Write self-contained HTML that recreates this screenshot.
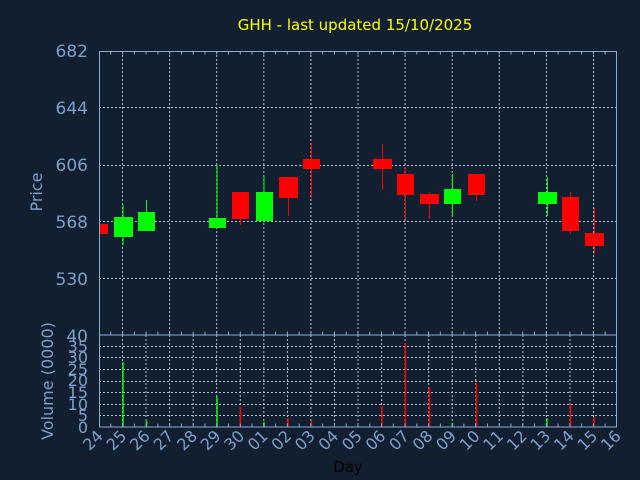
<!DOCTYPE html>
<html><head><meta charset="utf-8"><style>
html,body{margin:0;padding:0;background:#111f30;}
svg{display:block;font-family:"DejaVu Sans","Liberation Sans",sans-serif;}
</style></head><body>
<svg width="640" height="480" viewBox="0 0 640 480" xmlns="http://www.w3.org/2000/svg">
<rect width="640" height="480" fill="#111f30"/>
<text x="355" y="30" fill="#ffff00" font-size="15" text-anchor="middle">GHH - last updated 15/10/2025</text>
<g stroke="#b8c0cc" stroke-width="1" stroke-dasharray="2,2">
<line x1="99" y1="107.5" x2="617" y2="107.5"/>
<line x1="99" y1="165.5" x2="617" y2="165.5"/>
<line x1="99" y1="221.5" x2="617" y2="221.5"/>
<line x1="99" y1="278.5" x2="617" y2="278.5"/>
<line x1="122.5" y1="51" x2="122.5" y2="335"/>
<line x1="169.6" y1="51" x2="169.6" y2="335"/>
<line x1="216.7" y1="51" x2="216.7" y2="335"/>
<line x1="263.8" y1="51" x2="263.8" y2="335"/>
<line x1="310.9" y1="51" x2="310.9" y2="335"/>
<line x1="358" y1="51" x2="358" y2="335"/>
<line x1="405.1" y1="51" x2="405.1" y2="335"/>
<line x1="452.2" y1="51" x2="452.2" y2="335"/>
<line x1="499.3" y1="51" x2="499.3" y2="335"/>
<line x1="546.4" y1="51" x2="546.4" y2="335"/>
<line x1="593.5" y1="51" x2="593.5" y2="335"/>
</g>
<g stroke="#b8c0cc" stroke-width="1" stroke-dasharray="2,2">
<line x1="99" y1="346.5" x2="617" y2="346.5"/>
<line x1="99" y1="357.5" x2="617" y2="357.5"/>
<line x1="99" y1="369.5" x2="617" y2="369.5"/>
<line x1="99" y1="381.5" x2="617" y2="381.5"/>
<line x1="99" y1="392.5" x2="617" y2="392.5"/>
<line x1="99" y1="404.5" x2="617" y2="404.5"/>
<line x1="99" y1="415.5" x2="617" y2="415.5"/>
<line x1="122.5" y1="335" x2="122.5" y2="427"/>
<line x1="146" y1="335" x2="146" y2="427"/>
<line x1="169.6" y1="335" x2="169.6" y2="427"/>
<line x1="193.2" y1="335" x2="193.2" y2="427"/>
<line x1="216.7" y1="335" x2="216.7" y2="427"/>
<line x1="240.3" y1="335" x2="240.3" y2="427"/>
<line x1="263.8" y1="335" x2="263.8" y2="427"/>
<line x1="287.4" y1="335" x2="287.4" y2="427"/>
<line x1="310.9" y1="335" x2="310.9" y2="427"/>
<line x1="334.5" y1="335" x2="334.5" y2="427"/>
<line x1="358" y1="335" x2="358" y2="427"/>
<line x1="381.6" y1="335" x2="381.6" y2="427"/>
<line x1="405.1" y1="335" x2="405.1" y2="427"/>
<line x1="428.7" y1="335" x2="428.7" y2="427"/>
<line x1="452.2" y1="335" x2="452.2" y2="427"/>
<line x1="475.8" y1="335" x2="475.8" y2="427"/>
<line x1="499.3" y1="335" x2="499.3" y2="427"/>
<line x1="522.9" y1="335" x2="522.9" y2="427"/>
<line x1="546.4" y1="335" x2="546.4" y2="427"/>
<line x1="570" y1="335" x2="570" y2="427"/>
<line x1="593.5" y1="335" x2="593.5" y2="427"/>
</g>
<g stroke-width="1">
<rect x="99" y="224" width="9" height="10" fill="#ff0000"/>
<line x1="123" y1="205" x2="123" y2="245" stroke="#00ff00"/><rect x="114" y="217" width="19" height="20" fill="#00ff00"/>
<line x1="146.5" y1="200" x2="146.5" y2="212" stroke="#00ff00"/><rect x="138" y="212" width="17" height="19" fill="#00ff00"/>
<line x1="217" y1="165" x2="217" y2="218" stroke="#00ff00"/><rect x="209" y="218" width="17" height="10" fill="#00ff00"/>
<line x1="240.5" y1="219" x2="240.5" y2="225" stroke="#ff0000"/><rect x="232" y="192" width="17" height="27" fill="#ff0000"/>
<line x1="264" y1="177" x2="264" y2="192" stroke="#00ff00"/><rect x="256" y="192" width="17" height="29" fill="#00ff00"/>
<line x1="288.5" y1="198" x2="288.5" y2="216" stroke="#ff0000"/><rect x="279" y="177" width="19" height="21" fill="#ff0000"/>
<line x1="311.5" y1="143" x2="311.5" y2="198" stroke="#ff0000"/><rect x="303" y="159" width="17" height="10" fill="#ff0000"/>
<line x1="382.5" y1="144" x2="382.5" y2="190" stroke="#ff0000"/><rect x="373" y="159" width="19" height="10" fill="#ff0000"/>
<line x1="405.5" y1="167" x2="405.5" y2="219" stroke="#ff0000"/><rect x="397" y="174" width="17" height="21" fill="#ff0000"/>
<line x1="429.5" y1="192" x2="429.5" y2="219" stroke="#ff0000"/><rect x="420" y="194" width="19" height="10" fill="#ff0000"/>
<line x1="452.5" y1="174" x2="452.5" y2="216" stroke="#00ff00"/><rect x="444" y="189" width="17" height="15" fill="#00ff00"/>
<line x1="476.5" y1="195" x2="476.5" y2="201" stroke="#ff0000"/><rect x="468" y="174" width="17" height="21" fill="#ff0000"/>
<line x1="547.5" y1="177" x2="547.5" y2="216" stroke="#00ff00"/><rect x="538" y="192" width="19" height="12" fill="#00ff00"/>
<line x1="570.5" y1="192" x2="570.5" y2="234" stroke="#ff0000"/><rect x="562" y="197" width="17" height="34" fill="#ff0000"/>
<line x1="594.5" y1="208" x2="594.5" y2="254" stroke="#ff0000"/><rect x="585" y="233" width="19" height="13" fill="#ff0000"/>
</g>
<g stroke-width="1.5">
<line x1="123" y1="362" x2="123" y2="427" stroke="#00ff00"/>
<line x1="146.5" y1="421" x2="146.5" y2="427" stroke="#00ff00"/>
<line x1="217" y1="397" x2="217" y2="427" stroke="#00ff00"/>
<line x1="240.5" y1="407" x2="240.5" y2="427" stroke="#ff0000"/>
<line x1="264" y1="422" x2="264" y2="427" stroke="#00ff00"/>
<line x1="288" y1="418" x2="288" y2="427" stroke="#ff0000"/>
<line x1="311.5" y1="421" x2="311.5" y2="427" stroke="#ff0000"/>
<line x1="382" y1="406" x2="382" y2="427" stroke="#ff0000"/>
<line x1="405.5" y1="343" x2="405.5" y2="427" stroke="#ff0000"/>
<line x1="429.5" y1="387" x2="429.5" y2="427" stroke="#ff0000"/>
<line x1="452.5" y1="423" x2="452.5" y2="427" stroke="#00ff00"/>
<line x1="476.5" y1="383" x2="476.5" y2="427" stroke="#ff0000"/>
<line x1="547" y1="418" x2="547" y2="427" stroke="#00ff00"/>
<line x1="570.5" y1="404" x2="570.5" y2="427" stroke="#ff0000"/>
<line x1="594" y1="417" x2="594" y2="427" stroke="#ff0000"/>
</g>
<g fill="none" stroke="#8aa8d4" stroke-width="1">
<rect x="99.5" y="51.5" width="517" height="283.5"/>
<rect x="99.5" y="335" width="517" height="92"/>
</g>
<g stroke="#8aa8d4">
<line x1="99" y1="53" x2="617" y2="53" stroke-width="3" stroke-dasharray="1,10.77" stroke-dashoffset="-11.3"/>
<line x1="99" y1="333" x2="617" y2="333" stroke-width="3" stroke-dasharray="1,10.77" stroke-dashoffset="-11.3"/>
<line x1="99" y1="425" x2="617" y2="425" stroke-width="3" stroke-dasharray="1,10.77" stroke-dashoffset="-11.3"/>
</g>
<g fill="#7d9fcc" font-size="17" text-anchor="end">
<text x="88" y="57">682</text>
<text x="88" y="114">644</text>
<text x="88" y="171">606</text>
<text x="88" y="228">568</text>
<text x="88" y="285">530</text>
<text x="88" y="342">40</text>
</g>
<g fill="#7d9fcc" font-size="16" text-anchor="end">
<text x="88" y="352">35</text>
<text x="88" y="363">30</text>
<text x="88" y="375">25</text>
<text x="88" y="386">20</text>
<text x="88" y="398">15</text>
<text x="88" y="410">10</text>
<text x="88" y="421">5</text>
<text x="88" y="433">0</text>
</g>
<text transform="translate(42,192) rotate(-90)" fill="#7d9fcc" font-size="16" text-anchor="middle">Price</text>
<text transform="translate(53,381) rotate(-90)" fill="#7d9fcc" font-size="16" text-anchor="middle">Volume (0000)</text>
<g fill="#7d9fcc" font-size="16" text-anchor="end">
<text transform="translate(104,437) rotate(-45)">24</text>
<text transform="translate(127.5,437) rotate(-45)">25</text>
<text transform="translate(151,437) rotate(-45)">26</text>
<text transform="translate(174.6,437) rotate(-45)">27</text>
<text transform="translate(198.2,437) rotate(-45)">28</text>
<text transform="translate(221.7,437) rotate(-45)">29</text>
<text transform="translate(245.3,437) rotate(-45)">30</text>
<text transform="translate(268.8,437) rotate(-45)">01</text>
<text transform="translate(292.4,437) rotate(-45)">02</text>
<text transform="translate(315.9,437) rotate(-45)">03</text>
<text transform="translate(339.5,437) rotate(-45)">04</text>
<text transform="translate(363,437) rotate(-45)">05</text>
<text transform="translate(386.6,437) rotate(-45)">06</text>
<text transform="translate(410.1,437) rotate(-45)">07</text>
<text transform="translate(433.7,437) rotate(-45)">08</text>
<text transform="translate(457.2,437) rotate(-45)">09</text>
<text transform="translate(480.8,437) rotate(-45)">10</text>
<text transform="translate(504.3,437) rotate(-45)">11</text>
<text transform="translate(527.9,437) rotate(-45)">12</text>
<text transform="translate(551.4,437) rotate(-45)">13</text>
<text transform="translate(575,437) rotate(-45)">14</text>
<text transform="translate(598.5,437) rotate(-45)">15</text>
<text transform="translate(622,437) rotate(-45)">16</text>
</g>
<text x="348" y="472" fill="#000000" font-size="15" text-anchor="middle">Day</text>
</svg>
</body></html>
